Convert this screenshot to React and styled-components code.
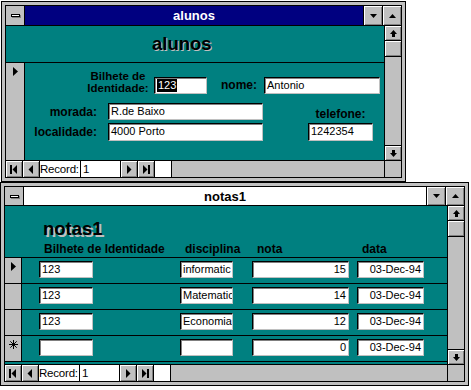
import React from 'react'
import styled, { createGlobalStyle } from 'styled-components'

const GlobalStyle = createGlobalStyle`
  body {
    margin: 0;
    background: #fff;
    font-family: "Liberation Sans", Arial, sans-serif;
  }
`

const TEAL = '#008080'
const GREY = '#c0c0c0'
const DARK = '#808080'

const bevel = `box-shadow: inset 1px 1px 0 #fff, inset -1px -1px 0 ${DARK};`

const Tri = ({ dir = 'down', w = 7, h = 4 }) => {
  const pts = {
    down: `0,0 ${w},0 ${w / 2},${h}`,
    up: `0,${h} ${w},${h} ${w / 2},0`,
    left: `${w},0 ${w},${h} 0,${h / 2}`,
    right: `0,0 0,${h} ${w},${h / 2}`,
  }[dir]
  return (
    <svg width={w} height={h} viewBox={`0 0 ${w} ${h}`}>
      <polygon points={pts} fill="#000" />
    </svg>
  )
}

const ScrollArrow = ({ dir }) => (
  <svg width="7" height="7" viewBox="0 0 7 7">
    {dir === 'up' ? (
      <path d="M3.5 0 L7 4 L5 4 L5 7 L2 7 L2 4 L0 4 Z" fill="#000" />
    ) : (
      <path d="M2 0 L5 0 L5 3 L7 3 L3.5 7 L0 3 L2 3 Z" fill="#000" />
    )}
  </svg>
)

const NavGlyph = ({ kind }) => (
  <svg width="8" height="9" viewBox="0 0 8 9">
    {kind === 'first' && (
      <>
        <rect x="0" y="0" width="2" height="9" fill="#000" />
        <polygon points="7,0 7,9 2.5,4.5" fill="#000" />
      </>
    )}
    {kind === 'prev' && <polygon points="6,0 6,9 1.5,4.5" fill="#000" />}
    {kind === 'next' && <polygon points="2,0 2,9 6.5,4.5" fill="#000" />}
    {kind === 'last' && (
      <>
        <polygon points="1,0 1,9 5.5,4.5" fill="#000" />
        <rect x="6" y="0" width="2" height="9" fill="#000" />
      </>
    )}
  </svg>
)

const Star = () => (
  <svg width="9" height="9" viewBox="0 0 9 9">
    <g stroke="#000" strokeWidth="1">
      <line x1="4.5" y1="0" x2="4.5" y2="9" />
      <line x1="0" y1="4.5" x2="9" y2="4.5" />
      <line x1="1.3" y1="1.3" x2="7.7" y2="7.7" />
      <line x1="7.7" y1="1.3" x2="1.3" y2="7.7" />
    </g>
  </svg>
)

const Window = ({ width, title, active, height, children, nav }) => (
  <Styles.Win>
    <Styles.Frame $w={width}>
      <Styles.TitleRow $h={height}>
        <Styles.SysBox>
          <Styles.Dash />
        </Styles.SysBox>
        <Styles.Caption $active={active}>{title}</Styles.Caption>
        <Styles.TitleBtn>
          <Tri dir="down" />
        </Styles.TitleBtn>
        <Styles.TitleBtn>
          <Tri dir="up" />
        </Styles.TitleBtn>
      </Styles.TitleRow>
      <Styles.Body>
        <Styles.Main>{children}</Styles.Main>
        <Styles.VScroll>
          <Styles.ScrollBtn>
            <ScrollArrow dir="up" />
          </Styles.ScrollBtn>
          <Styles.Thumb />
          <Styles.Track />
          <Styles.ScrollBtn $bottom>
            <ScrollArrow dir="down" />
          </Styles.ScrollBtn>
        </Styles.VScroll>
      </Styles.Body>
      {nav}
    </Styles.Frame>
  </Styles.Win>
)

const NavBar = () => (
  <Styles.Nav>
    <Styles.NavBtn>
      <NavGlyph kind="first" />
    </Styles.NavBtn>
    <Styles.NavBtn>
      <NavGlyph kind="prev" />
    </Styles.NavBtn>
    <Styles.RecLabel>Record:</Styles.RecLabel>
    <Styles.RecField>1</Styles.RecField>
    <Styles.NavBtn>
      <NavGlyph kind="next" />
    </Styles.NavBtn>
    <Styles.NavBtn>
      <NavGlyph kind="last" />
    </Styles.NavBtn>
    <Styles.WhiteBox />
    <Styles.HTrack />
    <Styles.Corner />
  </Styles.Nav>
)

const notas = [
  { bi: '123', disc: 'informatic', nota: '15', data: '03-Dec-94', current: true },
  { bi: '123', disc: 'Matematic', nota: '14', data: '03-Dec-94' },
  { bi: '123', disc: 'Economia', nota: '12', data: '03-Dec-94' },
  { bi: '', disc: '', nota: '0', data: '03-Dec-94', isNew: true },
]

export default function App() {
  return (
    <>
      <GlobalStyle />
      <Styles.Desktop>
        <Styles.TopSlot>
          <Window width={395} height={19} title="alunos" active nav={<NavBar />}>
            <Styles.FormHeader>
              <Styles.BigTitle $shadow={1}>alunos</Styles.BigTitle>
            </Styles.FormHeader>
            <Styles.Detail>
              <Styles.Selector>
                <Styles.SelMark>
                  <Tri dir="right" w={5} h={9} />
                </Styles.SelMark>
              </Styles.Selector>
              <Styles.FormBody>
                <Styles.FormRow $h={28} $pl={57}>
                  <Styles.Label $w={72} $align="center" $size={11.5}>
                    Bilhete de
                    <br />
                    Identidade:
                  </Styles.Label>
                  <Styles.Field $w={53}>
                    <Styles.Selected>123</Styles.Selected>
                  </Styles.Field>
                  <Styles.Label $w={50} $align="right" $mb={3}>
                    nome:
                  </Styles.Label>
                  <Styles.Field $w={116} $ml={7}>
                    Antonio
                  </Styles.Field>
                </Styles.FormRow>
                <Styles.FormRow $mt={9}>
                  <Styles.Stack>
                    <Styles.Pair>
                      <Styles.Label $w={72} $align="right">
                        morada:
                      </Styles.Label>
                      <Styles.Field $w={155} $ml={11}>
                        R.de Baixo
                      </Styles.Field>
                    </Styles.Pair>
                    <Styles.Pair>
                      <Styles.Label $w={72} $align="right">
                        localidade:
                      </Styles.Label>
                      <Styles.Field $w={155} $ml={11} $h={18}>
                        4000 Porto
                      </Styles.Field>
                    </Styles.Pair>
                  </Styles.Stack>
                  <Styles.Stack $ml={45} $center>
                    <Styles.Label $align="center">telefone:</Styles.Label>
                    <Styles.Field $w={65} $h={18}>
                      1242354
                    </Styles.Field>
                  </Styles.Stack>
                </Styles.FormRow>
              </Styles.FormBody>
            </Styles.Detail>
          </Window>
        </Styles.TopSlot>
        <Window width={459} height={18} title="notas1" nav={<NavBar />}>
          <Styles.GridHeader>
            <Styles.BigTitle $shadow={2}>notas1</Styles.BigTitle>
            <Styles.Cols>
              <Styles.ColLabel>Bilhete de Identidade</Styles.ColLabel>
              <Styles.ColLabel>disciplina</Styles.ColLabel>
              <Styles.ColLabel>nota</Styles.ColLabel>
              <Styles.ColLabel>data</Styles.ColLabel>
            </Styles.Cols>
          </Styles.GridHeader>
          {notas.map((n, i) => (
            <Styles.Row key={i}>
              <Styles.RowSel>
                {n.current && <Tri dir="right" w={5} h={9} />}
                {n.isNew && <Star />}
              </Styles.RowSel>
              <Styles.Cols $row>
                <Styles.Field>{n.bi}</Styles.Field>
                <Styles.Field>{n.disc}</Styles.Field>
                <Styles.Field $right>{n.nota}</Styles.Field>
                <Styles.Field $right>{n.data}</Styles.Field>
              </Styles.Cols>
            </Styles.Row>
          ))}
          <Styles.Filler />
        </Window>
      </Styles.Desktop>
    </>
  )
}

const Styles = {
  Desktop: styled.div`
    display: flex;
    flex-direction: column;
    width: 471px;
    height: 390px;
    overflow: hidden;
  `,
  TopSlot: styled.div`
    padding: 1px 0 0 1px;
  `,
  Win: styled.div`
    border: 1px solid #000;
    background: ${GREY};
    padding: 3px;
    width: fit-content;
  `,
  Frame: styled.div`
    border: 1px solid #000;
    width: ${(p) => p.$w}px;
    display: flex;
    flex-direction: column;
    background: ${TEAL};
  `,
  TitleRow: styled.div`
    display: flex;
    height: ${(p) => p.$h}px;
    border-bottom: 1px solid #000;
  `,
  SysBox: styled.div`
    width: 18px;
    border-right: 1px solid #000;
    background: ${GREY};
    display: flex;
    align-items: center;
    justify-content: center;
  `,
  Dash: styled.span`
    width: 7px;
    height: 1px;
    background: #fff;
    border: 1px solid #000;
    box-shadow: 1px 1px 0 ${DARK};
  `,
  Caption: styled.div`
    flex: 1;
    display: flex;
    align-items: center;
    justify-content: center;
    background: ${(p) => (p.$active ? '#000080' : '#fff')};
    color: ${(p) => (p.$active ? '#fff' : '#000')};
    font-weight: bold;
    font-size: 13px;
  `,
  TitleBtn: styled.div`
    width: 18px;
    border-left: 1px solid #000;
    background: ${GREY};
    display: flex;
    align-items: center;
    justify-content: center;
    ${bevel}
  `,
  Body: styled.div`
    display: flex;
  `,
  Main: styled.div`
    flex: 1;
    display: flex;
    flex-direction: column;
    background: ${TEAL};
  `,
  VScroll: styled.div`
    width: 16px;
    border-left: 1px solid #000;
    background: ${GREY};
    display: flex;
    flex-direction: column;
  `,
  ScrollBtn: styled.div`
    height: 14px;
    display: flex;
    align-items: center;
    justify-content: center;
    ${(p) => (p.$bottom ? 'border-top' : 'border-bottom')}: 1px solid #000;
    ${bevel}
  `,
  Thumb: styled.div`
    height: 15px;
    border-bottom: 1px solid #000;
    ${bevel}
  `,
  Track: styled.div`
    flex: 1;
  `,
  Nav: styled.div`
    display: flex;
    height: 16px;
    border-top: 1px solid #000;
    background: ${GREY};
    font-size: 11.5px;
  `,
  NavBtn: styled.div`
    width: 16px;
    border-right: 1px solid #000;
    display: flex;
    align-items: center;
    justify-content: center;
    ${bevel}
  `,
  RecLabel: styled.div`
    width: 40px;
    background: #fff;
    border-right: 1px solid #000;
    line-height: 16px;
    letter-spacing: -0.2px;
    white-space: nowrap;
    overflow: hidden;
  `,
  RecField: styled.div`
    width: 37px;
    padding-left: 2px;
    background: #fff;
    border-right: 1px solid #000;
    line-height: 16px;
  `,
  WhiteBox: styled.div`
    width: 16px;
    background: #fff;
    border-right: 1px solid #000;
  `,
  HTrack: styled.div`
    flex: 1;
  `,
  Corner: styled.div`
    width: 16px;
    border-left: 1px solid #000;
  `,
  FormHeader: styled.div`
    height: 36px;
    border-bottom: 1px solid #000;
    display: flex;
    align-items: center;
    padding-left: 146px;
  `,
  BigTitle: styled.div`
    font-weight: bold;
    font-size: 18.5px;
    color: #000;
    text-shadow: ${(p) => p.$shadow}px ${(p) => p.$shadow}px 0 ${GREY};
  `,
  Detail: styled.div`
    display: flex;
    height: 97px;
  `,
  Selector: styled.div`
    width: 18px;
    border-right: 1px solid #000;
    background: ${GREY};
  `,
  SelMark: styled.div`
    padding: 4px 0 0 7px;
    display: flex;
  `,
  FormBody: styled.div`
    flex: 1;
    padding-top: 3px;
  `,
  FormRow: styled.div`
    display: flex;
    align-items: flex-end;
    ${(p) => (p.$h ? `height: ${p.$h}px;` : '')}
    margin-top: ${(p) => p.$mt || 0}px;
    padding-left: ${(p) => p.$pl || 0}px;
  `,
  Stack: styled.div`
    display: flex;
    flex-direction: column;
    gap: 3px;
    margin-left: ${(p) => p.$ml || 0}px;
    align-items: ${(p) => (p.$center ? 'center' : 'stretch')};
  `,
  Pair: styled.div`
    display: flex;
    align-items: center;
  `,
  Label: styled.div`
    ${(p) => (p.$w ? `width: ${p.$w}px;` : '')}
    text-align: ${(p) => p.$align || 'left'};
    margin-bottom: ${(p) => p.$mb || 0}px;
    font-weight: bold;
    font-size: ${(p) => p.$size || 12}px;
    line-height: 12px;
    color: #000;
    white-space: nowrap;
  `,
  Field: styled.div`
    ${(p) => (p.$w ? `width: ${p.$w}px;` : '')}
    margin-left: ${(p) => p.$ml || 0}px;
    height: ${(p) => p.$h || 17}px;
    box-sizing: border-box;
    background: #fff;
    border-style: solid;
    border-width: 1px;
    border-color: #000 ${GREY} ${GREY} #000;
    box-shadow: inset 1px 1px 0 ${DARK};
    padding: 0 2px;
    font-size: 11px;
    line-height: 15px;
    color: #000;
    white-space: nowrap;
    overflow: hidden;
    text-align: ${(p) => (p.$right ? 'right' : 'left')};
  `,
  Selected: styled.span`
    background: #000;
    color: #fff;
    display: inline-block;
    line-height: 13px;
    margin-top: 1px;
    padding: 0 1px;
  `,
  GridHeader: styled.div`
    height: 52px;
    border-bottom: 1px solid #000;
    display: flex;
    flex-direction: column;
    justify-content: space-between;
    padding: 12px 0 2px 38px;
    box-sizing: border-box;
  `,
  Cols: styled.div`
    display: grid;
    ${(p) =>
      p.$row
        ? 'grid-template-columns: 54px 87px 53px 19px 97px 8px 67px;'
        : 'grid-template-columns: 58px 83px 57px 15px 101px 4px 67px;'}
    & > :nth-child(2) { grid-column: 3; }
    & > :nth-child(3) { grid-column: 5; }
    & > :nth-child(4) { grid-column: 7; }
    padding: ${(p) => (p.$row ? '3px 0 0 17px' : '0 0 0 1px')};
  `,
  ColLabel: styled.div`
    font-weight: bold;
    font-size: 12px;
    line-height: 12px;
    white-space: nowrap;
  `,
  Row: styled.div`
    display: flex;
    height: 25px;
    border-bottom: 1px solid #000;
  `,
  RowSel: styled.div`
    width: 17px;
    border-right: 1px solid #000;
    background: ${GREY};
    display: flex;
    justify-content: center;
    align-items: flex-start;
    padding-top: 4px;
    box-sizing: border-box;
  `,
  Filler: styled.div`
    flex: 1;
    min-height: 2px;
  `,
}
